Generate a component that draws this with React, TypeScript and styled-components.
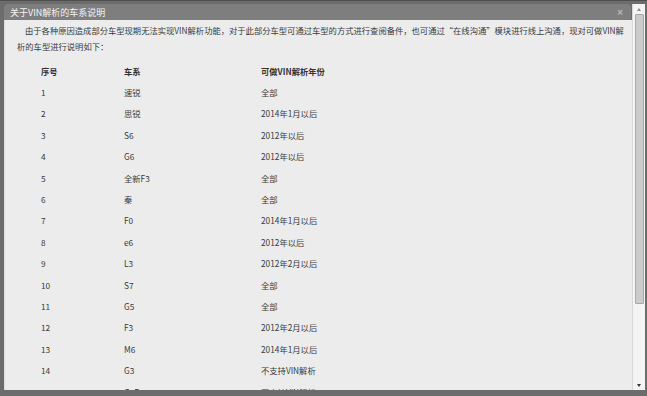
import React from 'react';
import styled, { createGlobalStyle } from 'styled-components';

interface SeriesRow {
  no: string;
  series: string;
  years: string;
}

const ROWS: SeriesRow[] = [
  { no: '1', series: '速锐', years: '全部' },
  { no: '2', series: '思锐', years: '2014年1月以后' },
  { no: '3', series: 'S6', years: '2012年以后' },
  { no: '4', series: 'G6', years: '2012年以后' },
  { no: '5', series: '全新F3', years: '全部' },
  { no: '6', series: '秦', years: '全部' },
  { no: '7', series: 'F0', years: '2014年1月以后' },
  { no: '8', series: 'e6', years: '2012年以后' },
  { no: '9', series: 'L3', years: '2012年2月以后' },
  { no: '10', series: 'S7', years: '全部' },
  { no: '11', series: 'G5', years: '全部' },
  { no: '12', series: 'F3', years: '2012年2月以后' },
  { no: '13', series: 'M6', years: '2014年1月以后' },
  { no: '14', series: 'G3', years: '不支持VIN解析' },
  { no: '15', series: 'G3R', years: '不支持VIN解析' },
  { no: '16', series: 'L3', years: '不支持VIN解析' },
];

const GlobalStyle = createGlobalStyle`
  html, body {
    margin: 0;
    padding: 0;
    background: #6c6c6c;
  }
  body {
    font-family: "Noto Sans CJK SC", "Liberation Sans", sans-serif;
  }
`;

const Frame = styled.div`
  width: 647px;
  height: 396px;
  box-sizing: border-box;
  padding: 3px 2px 6px 4px;
  display: flex;
  background: #6c6c6c;
  border-top: 1px solid #4e4e4e;
`;

const Panel = styled.div`
  flex: 1;
  display: flex;
  flex-direction: column;
  min-width: 0;
`;

const TitleBar = styled.div`
  height: 16px;
  margin-right: 1px;
  display: flex;
  align-items: center;
  justify-content: space-between;
  padding: 0 8px 0 6px;
  background: #7e7e7e;
  border-radius: 4px 4px 0 0;
  color: #f4f4f4;
  font-size: 9px;
`;

const Close = styled.span`
  color: #b8b8b8;
  font-size: 10px;
  font-family: "Liberation Sans", sans-serif;
  font-weight: bold;
`;

const Body = styled.div`
  flex: 1;
  overflow: hidden;
  background: #ececec;
  border-left: 1px solid #dcdcdc;
  padding: 2px 8px 0 12px;
  color: #3a3a3a;
  font-size: 8.3px;
`;

const Intro = styled.p`
  margin: 0;
  line-height: 16px;
  text-indent: 8px;
`;

const Table = styled.div`
  margin-top: 6px;
  padding-left: 24px;
  display: grid;
  grid-template-columns: 83px 137px 1fr;
  grid-auto-rows: 21.4px;
  align-items: center;
`;

const HeadCell = styled.div`
  font-weight: bold;
  color: #333;
`;

const Cell = styled.div``;

const ScrollBar = styled.div`
  width: 12px;
  display: flex;
  flex-direction: column;
  align-items: center;
  background: #f4f4f4;
  border-left: 1px solid #d8d8d8;
`;

const Arrow = styled.div<{ $down?: boolean }>`
  height: 10px;
  width: 100%;
  display: flex;
  align-items: center;
  justify-content: center;
  &::after {
    content: '';
    border-left: 2.5px solid transparent;
    border-right: 2.5px solid transparent;
    ${p => (p.$down ? 'border-top: 3px solid #333;' : 'border-bottom: 3px solid #8a8a8a;')}
  }
`;

const Thumb = styled.div`
  width: 9px;
  height: 290px;
  box-sizing: border-box;
  background: #cbcbcb;
  border: 1px solid #a9a9a9;
  border-radius: 1px;
`;

const Track = styled.div`
  flex: 1;
`;

export default function App() {
  return (
    <>
      <GlobalStyle />
      <Frame>
        <Panel>
          <TitleBar>
            <span>关于VIN解析的车系说明</span>
            <Close>×</Close>
          </TitleBar>
          <Body>
            <Intro>
              由于各种原因造成部分车型现期无法实现VIN解析功能，对于此部分车型可通过车型的方式进行查阅备件，也可通过“在线沟通”模块进行线上沟通，现对可做VIN解析的车型进行说明如下：
            </Intro>
            <Table>
              <HeadCell>序号</HeadCell>
              <HeadCell>车系</HeadCell>
              <HeadCell>可做VIN解析年份</HeadCell>
              {ROWS.map(r => (
                <React.Fragment key={r.no}>
                  <Cell>{r.no}</Cell>
                  <Cell>{r.series}</Cell>
                  <Cell>{r.years}</Cell>
                </React.Fragment>
              ))}
            </Table>
          </Body>
        </Panel>
        <ScrollBar>
          <Arrow />
          <Thumb />
          <Track />
          <Arrow $down />
        </ScrollBar>
      </Frame>
    </>
  );
}
